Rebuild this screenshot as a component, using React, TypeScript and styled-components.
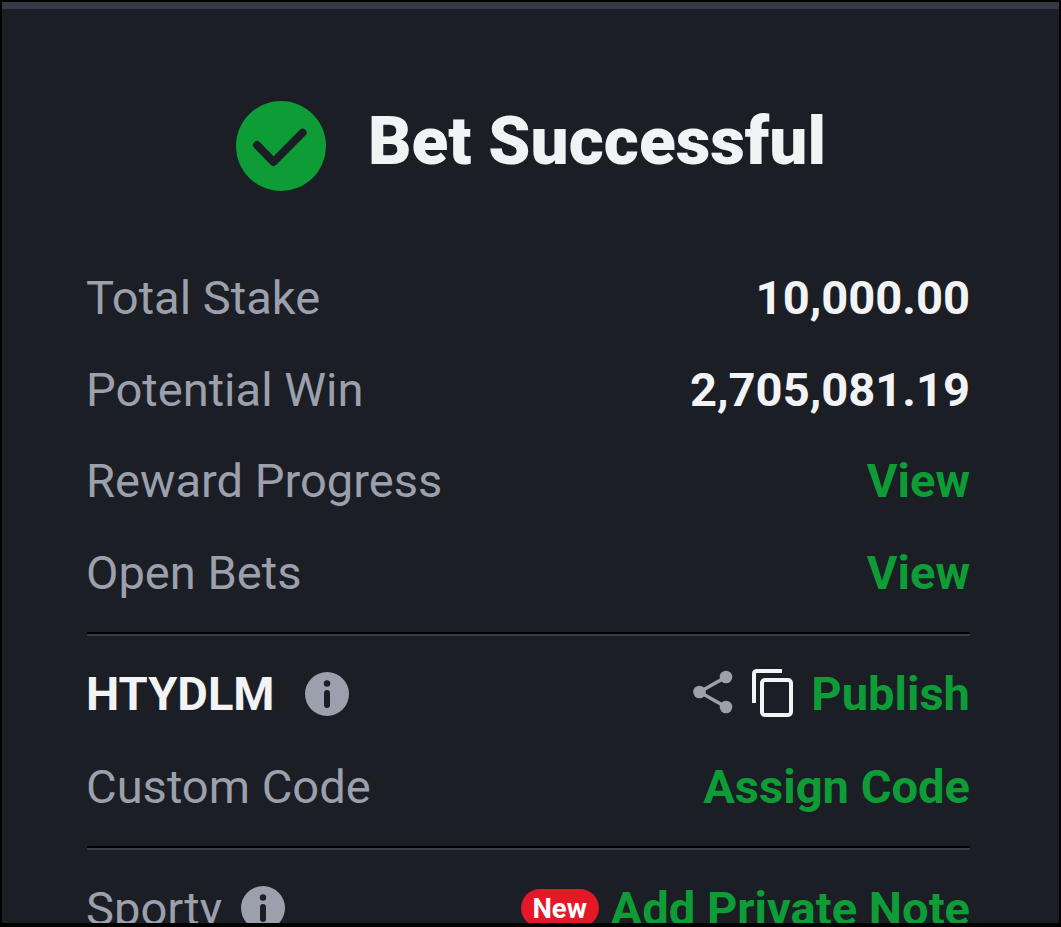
import React from "react";
import styled, { createGlobalStyle } from "styled-components";

const GlobalStyle = createGlobalStyle`
  html, body {
    margin: 0;
    height: 100%;
    background: #000;
    overflow: hidden;
  }
`;

const Page = styled.div`
  width: 1061px;
  height: 927px;
  box-sizing: border-box;
  padding: 2px 2px 4px 2px;
  font-family: Roboto, "Liberation Sans", sans-serif;
`;

const Card = styled.div`
  height: 100%;
  background: #1b1e25;
  border-top: 7px solid #353a45;
  box-sizing: border-box;
  padding: 0 89px 0 85px;
  overflow: hidden;
`;

const Header = styled.div`
  display: flex;
  align-items: center;
  justify-content: center;
  gap: 42px;
  padding-top: 92px;
  height: 90px;
  margin: 0 0 61px 5px;
  svg {
    flex-shrink: 0;
  }
`;

const Title = styled.h1`
  margin: 0 0 11px;
  font-size: 67.5px;
  line-height: 80px;
  font-weight: 900;
  color: #f2f3f5;
`;

const Row = styled.div<{ $h?: number }>`
  display: flex;
  align-items: center;
  justify-content: space-between;
  height: ${(p) => p.$h ?? 91.6}px;
`;

const Left = styled.div<{ $gap: number }>`
  display: flex;
  align-items: center;
  gap: ${(p) => p.$gap}px;
`;

const Right = styled.div`
  display: flex;
  align-items: center;
`;

const Label = styled.span`
  font-size: 47.1px;
  margin-left: -1px;
  color: #9ca0ad;
`;

const Value = styled.span`
  font-size: 47.1px;
  font-weight: 700;
  color: #f2f3f5;
`;

const Link = styled.span`
  font-size: 47.1px;
  font-weight: 700;
  color: #0e9c36;
`;

const Code = styled(Value)`
  margin-left: -1px;
`;

const Divider = styled.div<{ $top: number; $bottom: number }>`
  height: 4px;
  margin: ${(p) => p.$top}px 0 ${(p) => p.$bottom}px;
  background: linear-gradient(#000 0 2px, #3a3d45 2px);
  border-radius: 1px;
`;

const Badge = styled.span`
  display: inline-flex;
  align-items: center;
  justify-content: center;
  width: 78px;
  height: 38px;
  margin-right: 12px;
  border-radius: 19px;
  background: #e41827;
  color: #fff;
  font-size: 27.5px;
  font-weight: 700;
`;

const IconSlot = styled.span<{ $mr: number; $mb: number }>`
  display: inline-flex;
  margin: 0 ${(p) => p.$mr}px ${(p) => p.$mb}px 0;
`;

const CheckIcon = () => (
  <svg width="90" height="90" viewBox="0 0 90 90">
    <circle cx="45" cy="45" r="45" fill="#0e9c36" />
    <path
      d="M21 44 L37.5 61 L66.5 31.7"
      fill="none"
      stroke="#1b1e25"
      strokeWidth="8"
      strokeLinecap="round"
      strokeLinejoin="round"
    />
  </svg>
);

const InfoIcon = () => (
  <svg width="44" height="44" viewBox="0 0 44 44">
    <circle cx="22" cy="22" r="22" fill="#9ca0ad" />
    <circle cx="22" cy="11.5" r="3.2" fill="#1b1e25" />
    <rect x="19" y="18" width="6" height="18" rx="3" fill="#1b1e25" />
  </svg>
);

const ShareIcon = () => (
  <svg width="40" height="44" viewBox="0 0 40 44">
    <path d="M33 7 L6.5 22 L33 37" fill="none" stroke="#9ca0ad" strokeWidth="3.5" />
    <circle cx="33" cy="7" r="6.3" fill="#9ca0ad" />
    <circle cx="6.5" cy="22" r="6.3" fill="#9ca0ad" />
    <circle cx="33" cy="37" r="6.3" fill="#9ca0ad" />
  </svg>
);

const CopyIcon = () => (
  <svg width="41" height="48" viewBox="0 0 41 48">
    <path d="M30 2 H5 Q2 2 2 5 V34" fill="none" stroke="#f2f3f5" strokeWidth="4" />
    <rect
      x="10"
      y="11"
      width="29"
      height="35"
      rx="3"
      fill="none"
      stroke="#f2f3f5"
      strokeWidth="4"
    />
  </svg>
);

export default function App() {
  return (
    <Page>
      <GlobalStyle />
      <Card>
        <Header>
          <CheckIcon />
          <Title>Bet Successful</Title>
        </Header>
        <Row>
          <Label>Total Stake</Label>
          <Value>10,000.00</Value>
        </Row>
        <Row>
          <Label>Potential Win</Label>
          <Value>2,705,081.19</Value>
        </Row>
        <Row>
          <Label>Reward Progress</Label>
          <Link>View</Link>
        </Row>
        <Row>
          <Label>Open Bets</Label>
          <Link>View</Link>
        </Row>
        <Divider $top={13.4} $bottom={12} />
        <Row $h={92}>
          <Left $gap={30}>
            <Code>HTYDLM</Code>
            <InfoIcon />
          </Left>
          <Right>
            <IconSlot $mr={19} $mb={3}>
              <ShareIcon />
            </IconSlot>
            <IconSlot $mr={18} $mb={2}>
              <CopyIcon />
            </IconSlot>
            <Link>Publish</Link>
          </Right>
        </Row>
        <Row $h={93}>
          <Label>Custom Code</Label>
          <Link>Assign Code</Link>
        </Row>
        <Divider $top={13.5} $bottom={12} />
        <Row>
          <Left $gap={19}>
            <Label>Sporty</Label>
            <InfoIcon />
          </Left>
          <Right>
            <Badge>New</Badge>
            <Link>Add Private Note</Link>
          </Right>
        </Row>
      </Card>
    </Page>
  );
}
